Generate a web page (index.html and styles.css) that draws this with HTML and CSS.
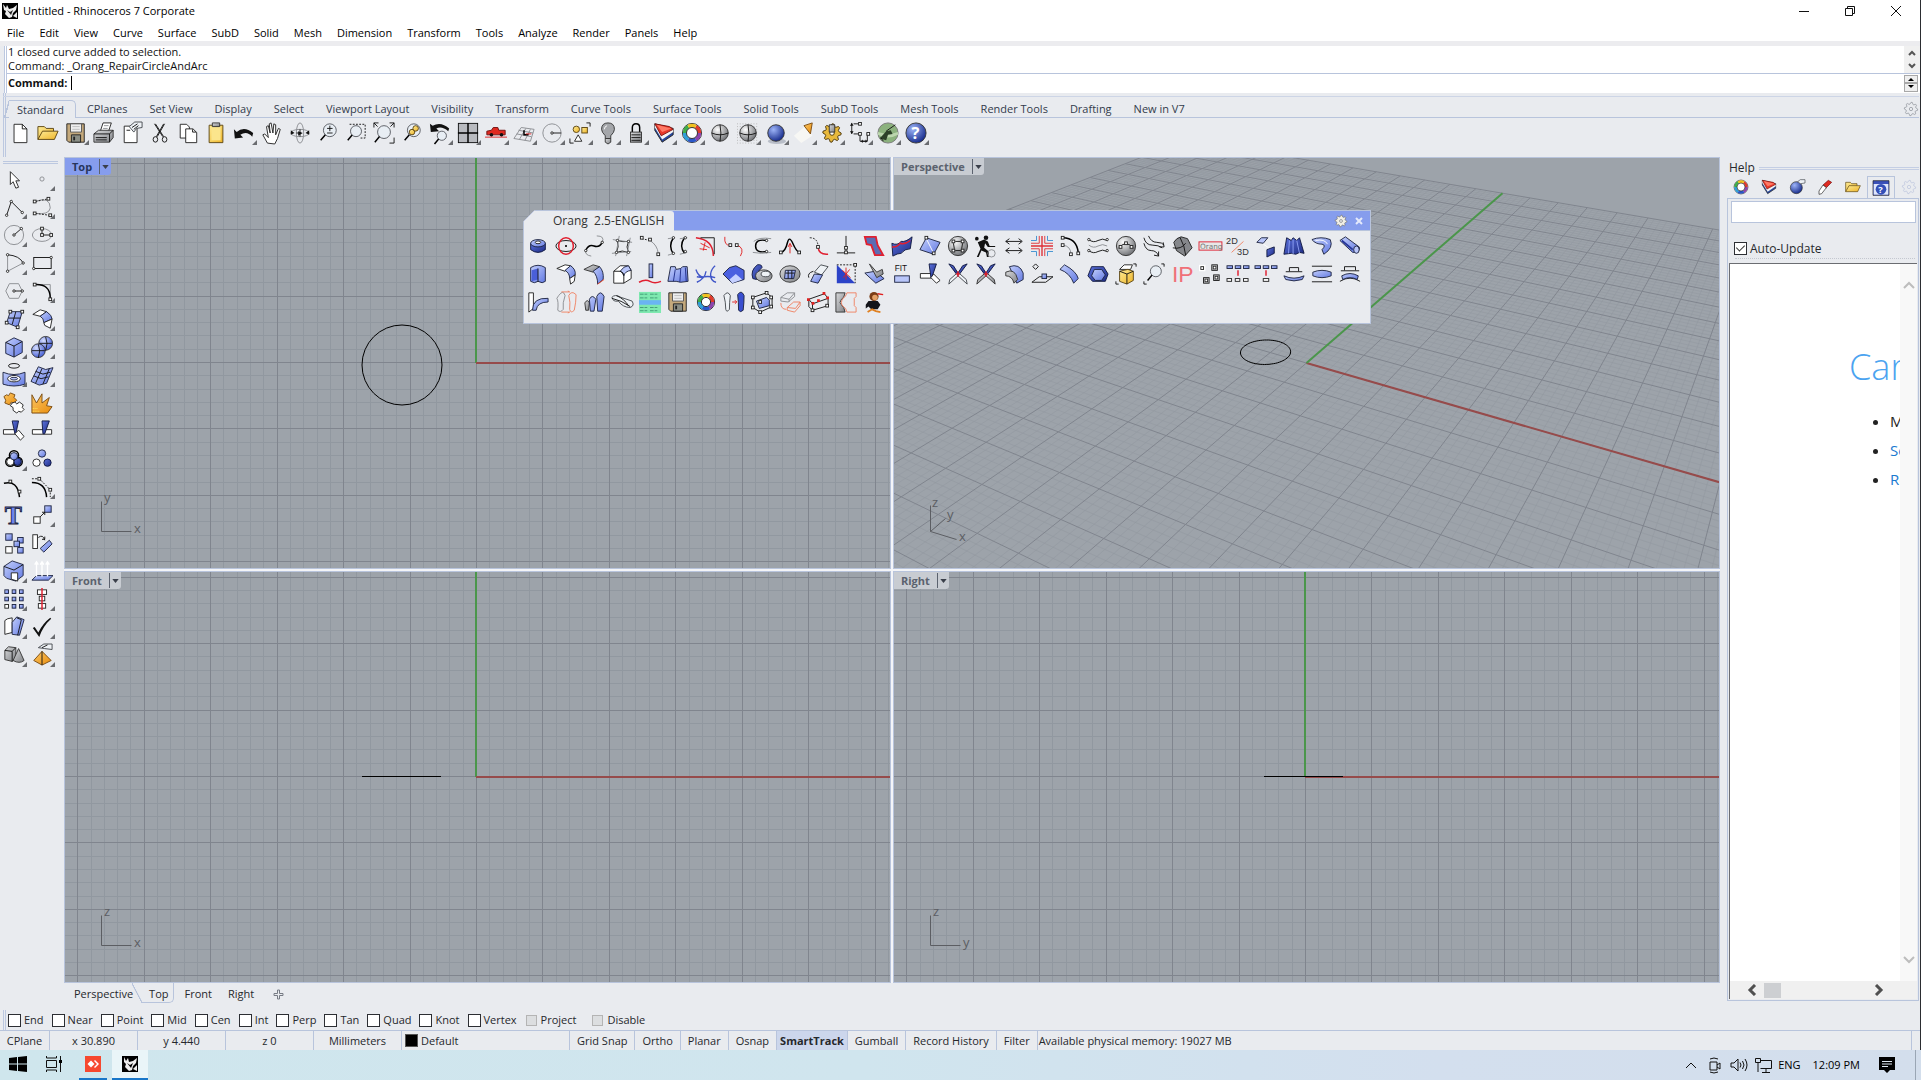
FILE: index.html
```html
<!DOCTYPE html>
<html lang="en">
<head>
<meta charset="utf-8">
<title>Untitled - Rhinoceros 7 Corporate</title>
<link rel="stylesheet" href="styles.css">
</head>
<body>
<div class="app">
  <header class="titlebar">
    <svg class="logo" viewBox="0 0 16 16" aria-hidden="true"><path d="M0 0h16v16H0z" fill="#000"/><path d="M1 1l3 4 1-3 2 4 4-1 4-3-1 5-3 3-1 4-3 1-4-4 1-3-2-1z" fill="#eee"/><path d="M5 7l3 2 3-2-2 5z" fill="#222"/><path d="M11 13l4-4v6z" fill="#eee"/></svg>
    <h1>Untitled - Rhinoceros 7 Corporate</h1>
    <div class="window-buttons">
      <button aria-label="Minimize"><svg viewBox="0 0 12 12"><path d="M1 6.500h10" class="k"/></svg></button>
      <button aria-label="Restore"><svg viewBox="0 0 12 12"><path d="M1.500 3.500h7v7h-7zM3.500 3.500v-2h7v7h-2" class="k"/></svg></button>
      <button aria-label="Close"><svg viewBox="0 0 12 12"><path d="M1 1l10 10M11 1L1 11" class="k"/></svg></button>
    </div>
  </header>
  <nav class="menubar">
    <button>File</button><button>Edit</button><button>View</button><button>Curve</button><button>Surface</button><button>SubD</button><button>Solid</button><button>Mesh</button><button>Dimension</button><button>Transform</button><button>Tools</button><button>Analyze</button><button>Render</button><button>Panels</button><button>Help</button>
  </nav>

  <section class="command">
    <div class="history">
      <p>1 closed curve added to selection.<br>Command: _Orang_RepairCircleAndArc</p>
      <div class="history-scroll">
        <svg viewBox="0 0 8 6"><path d="M1 5l3-3 3 3" class="chev"/></svg>
        <svg viewBox="0 0 8 6"><path d="M1 1l3 3 3-3" class="chev"/></svg>
      </div>
    </div>
    <div class="prompt">
      <label for="cmd">Command:</label><span class="caret"></span><input id="cmd" type="text" autocomplete="off">
      <div class="spinner">
        <button aria-label="Previous"><svg viewBox="0 0 8 6"><path d="M1 5l3-3 3 3z"/></svg></button>
        <button aria-label="Next"><svg viewBox="0 0 8 6"><path d="M1 1l3 3 3-3z"/></svg></button>
      </div>
    </div>
  </section>

  <nav class="tabs">
    <button class="active">Standard</button><button>CPlanes</button><button>Set View</button><button>Display</button><button>Select</button><button>Viewport Layout</button><button>Visibility</button><button>Transform</button><button>Curve Tools</button><button>Surface Tools</button><button>Solid Tools</button><button>SubD Tools</button><button>Mesh Tools</button><button>Render Tools</button><button>Drafting</button><button>New in V7</button>
    <button class="tab-options" aria-label="Options" data-gear="#8a8e96"></button>
  </nav>
  <div class="toolbar" data-toolbar="standard"></div>

  <main class="workspace">
    <aside class="sidebar"><div class="grip"></div><div class="side-tools" data-toolbar="side"></div></aside>

    <div class="center">
      <div class="viewports">
        <section class="viewport" data-view="top"><div class="vp-label active"><button>Top</button><button aria-label="Top menu"><svg viewBox="0 0 8 5"><path d="M0 0h8L4 5z"/></svg></button></div></section>
        <section class="viewport" data-view="perspective"><div class="vp-label"><button>Perspective</button><button aria-label="Perspective menu"><svg viewBox="0 0 8 5"><path d="M0 0h8L4 5z"/></svg></button></div></section>
        <section class="viewport" data-view="front"><div class="vp-label"><button>Front</button><button aria-label="Front menu"><svg viewBox="0 0 8 5"><path d="M0 0h8L4 5z"/></svg></button></div></section>
        <section class="viewport" data-view="right"><div class="vp-label"><button>Right</button><button aria-label="Right menu"><svg viewBox="0 0 8 5"><path d="M0 0h8L4 5z"/></svg></button></div></section>
      </div>
      <nav class="view-tabs">
        <button>Perspective</button><button class="active">Top</button><button>Front</button><button>Right</button>
        <button aria-label="New viewport"><svg viewBox="0 0 11 11"><path d="M4.500 1h2v3.500H10v2H6.500V10h-2V6.500H1v-2h3.500z" fill="none" stroke="#777b84"/></svg></button>
      </nav>
    </div>

    <aside class="panel">
      <div class="panel-title">Help<span></span></div>
      <div class="panel-tabs" data-toolbar="panel"></div>
      <div class="panel-body">
        <input class="search" type="text" aria-label="Search help">
        <label class="check"><input type="checkbox" checked>Auto-Update</label>
        <hr>
        <div class="browser">
          <div class="page-row">
            <article class="page">
              <h2>Can</h2>
              <ul><li>M</li><li><a href="#search">Se</a></li><li><a href="#retry">Re</a></li></ul>
            </article>
            <div class="vscroll">
              <svg viewBox="0 0 12 10"><path d="M1 8l5-5 5 5"/></svg>
              <svg viewBox="0 0 12 10"><path d="M1 2l5 5 5-5"/></svg>
            </div>
          </div>
          <div class="hscroll">
            <svg viewBox="0 0 10 12"><path d="M8 1L3 6l5 5"/></svg><span></span>
            <svg viewBox="0 0 10 12"><path d="M2 1l5 5-5 5"/></svg>
          </div>
        </div>
      </div>
    </aside>
  </main>

  <div class="osnap">
    <label><input type="checkbox">End</label><label><input type="checkbox">Near</label><label><input type="checkbox">Point</label><label><input type="checkbox">Mid</label><label><input type="checkbox">Cen</label><label><input type="checkbox">Int</label><label><input type="checkbox">Perp</label><label><input type="checkbox">Tan</label><label><input type="checkbox">Quad</label><label><input type="checkbox">Knot</label><label><input type="checkbox">Vertex</label><label class="wide"><input type="checkbox" disabled>Project</label><label class="wider"><input type="checkbox" disabled>Disable</label>
  </div>
  <footer class="status">
    <button class="w49">CPlane</button><span class="w88">x 30.890</span><span class="w88">y 4.440</span><span class="w88">z 0</span><button class="w88">Millimeters</button><button class="layer"><i></i>Default</button><button>Grid Snap</button><button>Ortho</button><button>Planar</button><button>Osnap</button><button class="on">SmartTrack</button><button>Gumball</button><button>Record History</button><button>Filter</button><span class="memory">Available physical memory: 19027 MB</span>
  </footer>

  <section class="palette" aria-label="Orang">
    <header><h2>Orang&nbsp; 2.5-ENGLISH</h2><button aria-label="Options" data-gear="#f1efe6"></button><button aria-label="Close"><svg viewBox="0 0 10 10"><path d="M2 2l6 6M8 2L2 8" stroke="#e4e9fb" stroke-width="2"/></svg></button></header>
    <div class="palette-tools" data-toolbar="orang"></div>
  </section>
</div>

<footer class="taskbar">
  <button aria-label="Start"><svg viewBox="0 0 18 18"><path d="M0 3l8-1v6.500H0zM9 2l9-1v7.500H9zM0 9.500h8V16l-8-1zM9 9.500h9V17l-9-1z"/></svg></button>
  <button aria-label="Task View"><svg viewBox="0 0 18 18"><path d="M1.500 5.500h10v7h-10zM1.500 1v2h10V1M1.500 17v-2h10v2M15.500 1v16" class="k"/><path d="M14 5h3v3h-3z"/></svg></button>
  <button class="running" aria-label="AnyDesk"><svg viewBox="0 0 18 18"><path d="M1 1h16v16H1z" fill="#f6482f"/><path d="M7 5.500L10.500 9 7 12.500 3.500 9z" fill="#fff"/><path d="M10 6l1-1 4 4-4 4-1-1 3-3z" fill="#fff"/></svg></button>
  <button class="running current" aria-label="Rhinoceros"><svg viewBox="0 0 18 18"><path d="M1 1h16v16H1z"/><path d="M3 2l2 4 2-3 1 4 4-1 4-3-1 5-3 3-1 4-3 1-4-4 1-3-2-2z" fill="#eee"/><path d="M6 8l3 2 3-2-2 5z"/><path d="M12 14l4-4v6z" fill="#eee"/></svg></button>
  <div class="tray">
    <svg viewBox="0 0 18 18"><path d="M4 12l5-5 5 5" class="k"/></svg>
    <svg viewBox="0 0 18 18"><path d="M4 6h7v8H4zM11 9l3-2v6l-3-2M4 3q4-2 8 0M4 16q4 2 8 0" class="k"/></svg>
    <svg viewBox="0 0 18 18"><path d="M1 7h3l4-4v12l-4-4H1zM10 6.500q2 2.500 0 5M12.500 5q3 4 0 8M15 3q4 6 0 12" class="k"/></svg>
    <svg viewBox="0 0 18 18"><path d="M6.500 4.500h11v8h-11M12 13v3M8 16.500h8M1.500 2.500h5v4h-5zM4 7v9" class="k"/></svg>
    <span>ENG</span><time>12:09 PM</time>
    <button aria-label="Notifications"><svg viewBox="0 0 18 18"><path d="M1 1h16v13h-5l-3 3-3-3H1z"/><path d="M4 5.500h10M4 8h10M4 10.500h6" stroke="#dde6f0"/></svg></button>
  </div>
</footer>
<script src="script.js"></script>
</body>
</html>
```
FILE: styles.css
```css
* { box-sizing: border-box; }
body { margin: 0; height: 100vh; display: flex; flex-direction: column; overflow: hidden; background: #e9ebef; color: #26282c; font: 11px/14px "Open Sans", "Noto Sans", sans-serif; }
button, input { font: inherit; color: inherit; }
button { margin: 0; padding: 0; border: 0; background: none; display: inline-flex; align-items: center; justify-content: center; white-space: nowrap; }
h1, h2, p, ul { margin: 0; padding: 0; font-weight: 400; }
svg { display: block; flex: none; }
.app { flex: 1; min-height: 0; display: flex; flex-direction: column; position: relative; border-right: 1px solid #2b2d31; }

.titlebar { height: 22px; flex: none; background: #fff; display: flex; align-items: center; padding-left: 2px; color: #000; }
.titlebar .logo { width: 16px; height: 16px; margin-right: 5px; }
.titlebar h1 { font-size: 11px; }
.window-buttons { margin: 0 1px 0 auto; display: flex; }
.window-buttons button { width: 46px; height: 20px; }
.window-buttons svg { width: 12px; height: 12px; }
.menubar { height: 24px; flex: none; background: #fff; display: flex; gap: 1px; align-items: flex-start; color: #000; border-bottom: 5px solid #ececef; }
.menubar button { height: 20px; padding: 1px 7px 0; }

.command { flex: none; margin-left: 4px; border-left: 3px double #bcc8e0; background: #fff; color: #111; }
.history { height: 28px; display: flex; justify-content: space-between; border-bottom: 1px solid #b8c4dc; padding-left: 1px; overflow: hidden; }
.history p { line-height: 14px; margin-top: -1px; }
.history-scroll { width: 16px; background: #f0f0f0; display: flex; flex-direction: column; justify-content: space-around; align-items: center; }
.history-scroll svg { width: 8px; height: 6px; }
.chev { fill: none; stroke: #555; stroke-width: 2; }
.prompt { height: 18px; margin-bottom: 1px; display: flex; align-items: center; padding-left: 1px; }
.prompt label { font-weight: 700; }
.caret { width: 1px; height: 14px; background: #000; margin-left: 4px; }
.prompt input { flex: 1; border: 0; outline: 0; height: 14px; background: transparent; }
.spinner { width: 14px; height: 17px; margin-right: 2px; display: flex; flex-direction: column; }
.spinner button { flex: 1; border: 1px solid #a8a8a8; background: #efefef; }
.spinner svg { width: 8px; height: 6px; }

.tabs { height: 25px; flex: none; display: flex; align-items: flex-end; margin: 0 1px 0 3px; padding-left: 3px; border-left: 3px double #bcc8e0; border-bottom: 1px solid #b8c4dc; position: relative; }
.tabs::before { content: ""; position: absolute; left: -3px; right: 0; top: 3px; border-top: 1px solid #cdd5e6; }
.tabs button { height: 17px; padding: 0 11px; color: #333b4c; position: relative; }
.tabs .active { border: 1px solid #b8c4dc; border-width: 1px 1px 0 0; border-radius: 0 5px 0 0; margin-bottom: -1px; height: 18px; background: #e9ebef; padding: 0 11px 0 8px; }
.tabs .active::before { content: ""; position: absolute; left: -5px; top: 0; width: 5px; height: 17px; background: linear-gradient(106deg, transparent 45%, #b8c4dc 46% 60%, transparent 61%); }
.tabs .tab-options { margin-left: auto; padding: 0; width: 16px; height: 17px; }
.tabs .tab-options svg { width: 16px; height: 16px; }

.toolbar { flex: none; height: 39px; display: flex; margin-left: 3px; padding-top: 1px; border-left: 3px double #bcc8e0; }
.tool { width: 28px; height: 28px; position: relative; flex: none; }
.tool svg { width: 22px; height: 22px; overflow: visible; }
.tool.more::after { content: ""; position: absolute; right: 1px; bottom: 2px; width: 5px; height: 5px; background: #6a6c70; clip-path: polygon(100% 0, 100% 100%, 0 100%); }

.workspace { flex: 1; min-height: 0; display: grid; grid-template-columns: 64px minmax(0, 1fr) 200px; }
.sidebar { padding: 4px 0 0 0; }
.grip { height: 4px; margin: 0 6px 0 3px; border-top: 3px double #bcc8e0; }
.side-tools { display: grid; grid-template-columns: 28px 28px; }
.center { display: flex; flex-direction: column; min-width: 0; }
.viewports { flex: 1; min-height: 0; display: grid; grid-template: repeat(2, minmax(0, 1fr)) / repeat(2, minmax(0, 1fr)); gap: 2px; background: #f4f5f8; }
.viewport { position: relative; border: 1px solid #b8c4dc; background: #9da3aa; overflow: hidden; }
.viewport > svg { position: absolute; inset: 0; width: 100%; height: 100%; }
.minor { fill: none; stroke: #9198a0; stroke-width: 1; }
.major { fill: none; stroke: #80858e; stroke-width: 1; }
.ortho { shape-rendering: crispEdges; }
.persp .minor { stroke-opacity: .5; }
.red-axis { stroke: #964b4b; stroke-width: 2; }
.green-axis { stroke: #4b964b; stroke-width: 2; }
.curve { fill: none; stroke: #000; }
.triad { fill: none; stroke: #5c5e63; }
.viewport text { font-size: 13px; fill: #5c5e63; }
.vp-label { position: absolute; z-index: 1; left: 0; top: 0; height: 17px; display: flex; align-items: center; background: #c8ccd2; color: #5b626e; font-weight: 700; border-radius: 0 0 3px 0; }
.vp-label.active { background: #869ded; color: #27355c; }
.vp-label button:first-child { padding: 0 7px; height: 15px; border-right: 1px solid #5b626e; }
.vp-label button:last-child { width: 11px; }
.vp-label svg { width: 7px; height: 4px; fill: #3a3f4a; }

.view-tabs { height: 27px; flex: none; display: flex; padding-left: 2px; }
.view-tabs button { height: 20px; padding: 2px 8px 0; position: relative; }
.view-tabs .active { border: 1px solid #b8c4dc; border-width: 0 1px 1px 0; border-radius: 0 0 5px 0; padding: 2px 5px 0 8px; margin-right: 2px; }
.view-tabs .active::before { content: ""; position: absolute; left: -9px; top: 0; width: 10px; height: 20px; background: linear-gradient(63deg, transparent 46%, #b8c4dc 47% 53%, transparent 54%); }
.view-tabs svg { width: 11px; height: 11px; margin-left: 3px; }

.panel { padding: 0 1px 9px 7px; display: flex; flex-direction: column; min-width: 0; }
.panel-title { height: 19px; display: flex; align-items: center; padding: 3px 0 0 2px; gap: 4px; font-size: 12px; }
.panel-title span { flex: 1; border-top: 3px double #c4cee4; }
.panel-tabs { display: flex; height: 22px; align-items: center; overflow: hidden; }
.panel-tabs .tool { height: 22px; }
.panel-tabs .tool svg { width: 16px; height: 16px; }
.panel-tabs .tool.active { border: 1px solid #b8c4dc; border-bottom: 0; }
.panel-body { flex: 1; min-height: 0; display: flex; flex-direction: column; border: 1px solid #b8c4dc; padding: 2px 1px 1px 1px; }
.search { height: 22px; margin: 0 1px 0 2px; border: 1px solid #b8c4dc; background: #fff; min-width: 0; }
.check { display: flex; align-items: center; gap: 3px; margin: 18px 0 0 5px; height: 15px; font-size: 12px; }
input[type=checkbox] { appearance: none; margin: 0; width: 13px; height: 13px; border: 1px solid #2c2e33; background: #fff; flex: none; }
input[type=checkbox]:checked { position: relative; }
input[type=checkbox]:checked::after { content: ""; position: absolute; left: 3px; top: 0; width: 4px; height: 7px; border: solid #333; border-width: 0 1px 1px 0; transform: rotate(45deg); }
input[type=checkbox]:disabled { width: 11px; height: 11px; border-color: #b4b4b4; background: #dcdee0; }
.panel hr { margin: 2px 2px 0 6px; border: 0; border-top: 1px dotted #c4c8d0; }
.browser { flex: 1; min-height: 0; margin-top: 4px; display: flex; flex-direction: column; border: solid #6b6d72; border-width: 1px 0 0 1px; background: #fff; }
.page-row { flex: 1; min-height: 0; display: flex; }
.page { flex: 1; min-width: 0; overflow: hidden; padding: 74px 0 0 119px; font-weight: 300; white-space: nowrap; }
.page h2 { font-size: 36px; line-height: 58px; font-weight: 300; color: #4ba3f0; }
.page ul { padding: 11px 0 0 41px; font-size: 15px; line-height: 29px; color: #222; }
.page a { color: #1a7ad0; text-decoration: none; }
.vscroll { width: 17px; background: #f8f8f8; display: flex; flex-direction: column; justify-content: space-between; align-items: center; padding: 16px 0; }
.vscroll svg { width: 12px; height: 10px; fill: none; stroke: #bdbdbd; stroke-width: 2; }
.hscroll { height: 18px; background: #f0f0f0; display: flex; align-items: center; padding: 0 33px 0 17px; }
.hscroll svg { width: 10px; height: 12px; fill: none; stroke: #505050; stroke-width: 3; }
.hscroll span { width: 17px; height: 15px; background: #cdcfd2; margin: 0 auto 0 7px; }

.osnap { height: 20px; flex: none; display: flex; align-items: center; gap: 8px; margin-left: 3px; padding-left: 2px; border-left: 3px double #bcc8e0; }
.osnap label { display: flex; align-items: center; gap: 3px; }
.osnap .wide { margin-left: 1px; gap: 4px; }
.osnap .wider { margin-left: 8px; gap: 4px; }
.status { height: 20px; flex: none; display: flex; border-top: 1px solid #b8c4dc; padding-right: 8px; }
.status > * { display: flex; align-items: center; justify-content: center; padding: 0 7px; border-right: 1px solid #b8c4dc; }
.status .w49 { width: 50px; }
.status .w88 { width: 88px; }
.status .layer { width: 168px; justify-content: flex-start; padding-left: 3px; gap: 3px; }
.status .layer i { width: 13px; height: 13px; background: #000; border: 1px solid #555; }
.status .on { background: #ccd6ec; font-weight: 700; padding: 0 3px; }
.status .memory { flex: 1; justify-content: flex-start; padding-left: 1px; }

.palette { position: absolute; left: 523px; top: 210px; width: 848px; height: 114px; background: #e9ebef; border: 1px solid #b8c4dc; clip-path: polygon(12px 0, 100% 0, 100% 100%, 0 100%, 0 12px); z-index: 3; }
.palette header { height: 20px; display: flex; align-items: center; background: #869ded; border-bottom: 1px solid #b8c4dc; padding-right: 2px; }
.palette h2 { width: 150px; height: 20px; padding-left: 29px; font-size: 12px; line-height: 20px; background: #e9ebef; margin-right: auto; border-radius: 0 3px 0 0; color: #333; }
.palette header button { width: 18px; height: 18px; }
.palette header button svg { width: 14px; height: 14px; }
.palette header button:last-child svg { width: 10px; height: 10px; }
.palette-tools { display: grid; grid-template-columns: repeat(30, 28px); padding-top: 1px; }

.taskbar { height: 30px; flex: none; display: flex; align-items: stretch; background: linear-gradient(90deg, #cfe6ed, #d0e5ee 45%, #d3dfee 75%, #d3deec); padding-left: 4px; }
.taskbar > button { width: 28px; border-bottom: 2px solid transparent; }
.taskbar > button:nth-child(2) { margin: 0 8px 0 10px; width: 24px; }
.taskbar svg { width: 18px; height: 18px; }
.taskbar > .running { width: 28px; border-color: #1976c8; margin-left: 5px; }
.taskbar > .current { width: 36px; background: #eaf5f8; }
.tray { margin-left: auto; display: flex; align-items: center; gap: 6px; padding-right: 6px; margin-right: 5px; border-right: 1px solid #9aa6b4; color: #000; }
.tray time { padding: 0 12px 0 6px; }
.tray button { margin-right: 13px; }

.k { fill: none; stroke: #111; stroke-width: 1; }
.K { fill: none; stroke: #000; stroke-width: 1.600; }
.g { fill: none; stroke: #8a8c90; stroke-width: 1; }
.r { fill: none; stroke: #e02020; stroke-width: 1; }
.R { fill: none; stroke: #e02030; stroke-width: 1.600; }
.o { fill: none; stroke: #f08060; stroke-width: 1; }
.h { fill: none; stroke: #111; stroke-dasharray: 2 1.500; }
.b { stroke: #1c2340; stroke-width: 1; }
.l { fill: #b9c6fa; stroke: #1c2340; stroke-width: 1; }
.d { stroke: #101840; stroke-width: 1; }
.B { fill: #4a5fd8; stroke: none; }
.w { fill: #fff; stroke: #222; stroke-width: 1; }
.G { stroke: #333; stroke-width: 1; }
.y { stroke: #5a4310; stroke-width: 1; }
.O { stroke: #7a4a10; stroke-width: 1; }
.X { fill: #111; stroke: none; }
.F { fill: #e02a20; stroke: #701010; stroke-width: 1; }
.W { fill: none; stroke: #fff; stroke-width: 1; }
.z { fill: #eef2f6; stroke: #44484e; stroke-width: 1; }
```
FILE: script.js
```js
// Small vocabulary for the icon drawings; class names set stroke and flat fills,
// and the shaded materials below take a gradient.
const shades = {
  b: ['#c3cffc', '#6279e2'], d: ['#5c72dc', '#1d2b84'], G: ['#d9dadc', '#808286'],
  y: ['#fdeb96', '#eeb428'], O: ['#fbc765', '#e98d0e'],
  gs: ['#ffffff', '#75777b'], bs: ['#9db4f8', '#1c3190'], ls: ['#d4ddff', '#4b63d6']
};
const fill = c => shades[c] ? ` fill="url(#${c})"` : '';
const P = (c, d) => `<path class="${c}"${fill(c)} d="${d}"/>`;
const C = (c, x, y, r, ry = r) => `<ellipse class="${c}"${fill(c)} cx="${x}" cy="${y}" rx="${r}" ry="${ry}"/>`;
const N = (...a) => a.map((v, i) => i % 2 ? '' : `<rect class="w" x="${v - 1.5}" y="${a[i + 1] - 1.5}" width="3" height="3"/>`).join('');
const D = (...a) => a.map((v, i) => i % 2 ? '' : C('w', v, a[i + 1], 1.3)).join('');
const Q = (c, x, y, w, h = w) => `<rect class="${c}"${fill(c)} x="${x}" y="${y}" width="${w}" height="${h}"/>`;
const T = (s, x, y, size, color, family = 'Open Sans', weight = 400) => `<text x="${x}" y="${y}" font-size="${size}" fill="${color}" font-family="${family}, sans-serif" font-weight="${weight}">${s}</text>`;
const wheel = (r = 7) => {
  const colors = ['#e03a2c', '#8e44ad', '#2b57c8', '#2f9fd8', '#3fae49', '#f0c020'];
  const len = 2 * Math.PI * r / 6;
  return C('w', 12, 12, r + 2.4) + colors.map((c, i) =>
    `<circle cx="12" cy="12" r="${r}" fill="none" stroke="${c}" stroke-width="4" stroke-dasharray="${len} ${len * 5}" transform="rotate(${-60 + i * 60} 12 12)"/>`).join('') +
    `<circle cx="12" cy="12" r="${r - 2}" fill="#fff" stroke="#222"/>`;
};
const gear = (color, line = '#777', hole = '#e9ebef') => {
  let d = '';
  for (let i = 0; i < 32; i++) {
    const r = i % 4 < 2 ? 10 : 7.5, a = i * Math.PI / 16;
    d += (i ? 'L' : 'M') + (12 + r * Math.cos(a)).toFixed(1) + ' ' + (12 + r * Math.sin(a)).toFixed(1);
  }
  return `<path d="${d}z" fill="${color}" stroke="${line}"/><circle cx="12" cy="12" r="2.500" fill="${hole}" stroke="${line}"/>`;
};
const ball = (id, x, y, r) => `<circle cx="${x}" cy="${y}" r="${r}" fill="url(#${id})" stroke="#333"/>`;
const lens = (x = 13, y = 9, r = 6) => `<circle cx="${x}" cy="${y}" r="${r}" fill="#e8eef4" stroke="#55595f"/>` + P('K', `M${x - r * .7} ${y + r * .7}L${x - r - 3} ${y + r + 4}`);
const floppy = '<path d="M2 2h19v20H4l-2-2z" fill="#c4a97c" stroke="#222"/><path d="M6 2h12v9H6z" fill="#eee" stroke="#555"/><path d="M7 14h10v8H7z" fill="#8b8f86" stroke="#222"/><path d="M9 16h2v4H9z" fill="#222"/><path d="M8 5h8M8 8h8" stroke="#bbb"/>';
const folder = P('y', 'M1 19V5h7l2 2h8v3') + P('y', 'M1 19L6 10h17l-4 9z');
const layers = '<path d="M2 2v7l8 13 12-8V7z" fill="#27479c" stroke="#222"/><path d="M2 3v3l8 13 12-8V8z" fill="#f4f4f4"/><path d="M2 2l7 13 13-7-4-3z" fill="#e8382a" stroke="#7c1410"/><path d="M4 3l6 8 10-4z" fill="#ff7a66"/>';
const blades = (a, b) => P(a, 'M2 1l5 2 5 8-1 2z') + P(a, 'M22 1l-5 2-5 8 1 2z') + P(b, 'M2 23l1-5 8-7 1 3z') + P(b, 'M22 23l-1-5-8-7-1 3z') + P('R', 'M12 9v6M10 12h4');
const brackets = P('k', 'M20 1h3v3M1 20v3h3');

// Each entry: name, drawing, and whether the button opens a flyout.
const toolbars = {
  standard: [
    ['New', P('w', 'M5.500 2.500h9l5 5v15h-14z') + P('k', 'M14.500 2.500v5h5')],
    ['Open', folder],
    ['Save', floppy, 1],
    ['Print', P('w', 'M8 10L11 1h9l-3 9') + P('g', 'M12 4h5M11 7h5') + P('G', 'M1 13l5-4h16v8l-4 5H1z') + P('k', 'M1 13h17l4-4M18 13v9M3 17h12M3 19.500h12')],
    ['Properties', P('w', 'M3.500 4.500h14v18h-14z') + P('z', 'M9 5l6-5h8v6l-6 1-3 4z') + P('k', 'M6 9h4M12 6l6-4M14 8l5-4')],
    ['Cut', P('k', 'M6 2l9 14M17 2L9 16M7 2l9 14M16 2L8 16') + C('k', 7, 19, 2.5, 3) + C('k', 17, 19, 2.5, 3)],
    ['Copy', P('w', 'M3.500 2.500h7l3 3v12h-10z') + P('w', 'M9.500 7.500h8l4 4v11h-12z') + P('k', 'M17 8v3h4')],
    ['Paste', P('y', 'M4.500 3.500h15v19h-15z') + '<path d="M7 5h10v15H7z" fill="#fbe58c"/>' + P('G', 'M8 1h8v4H8z')],
    ['Undo', P('X', 'M2 18L1 8l3 3q8-7 18 1l-1 4q-6-7-13-2l3 3z'), 1],
    ['Pan', P('w', 'M7 23L2 14l2-1 4 4-2-12 2-1 2 8-1-10 2-1 2 11 1-10 2 1v11l3-7 2 1-3 10-3 6z')],
    ['Rotate view', C('g', 12, 12, 10, 4) + C('g', 12, 12, 4, 11) + P('X', 'M10 10l5 2-5 3zM2 14l0-5 4 3zM22 9v5l-4-2z') + P('k', 'M12 8v8M8 12h5')],
    ['Zoom', lens(14, 9, 7) + P('k', 'M11 7h6M14 4v6M11 12h6')],
    ['Zoom window', P('h', 'M5 2.500h17v15h-5') + lens(12, 10, 6)],
    ['Zoom extents', lens(12, 11, 7) + P('k', 'M1 6V1h5M18 1h5v5M23 17v6h-5M1 1l4 4M23 1l-4 4')],
    ['Zoom selected', lens(14, 9, 7) + C('y', 12, 11, 3) + C('y', 16, 7, 3)],
    ['Undo view', P('X', 'M2 11L1 2l3 2q9-5 18 3l-1 3q-7-6-13-3l3 3z') + lens(14, 15, 5), 1],
    ['Four viewports', '<rect x="1.500" y="1.500" width="21" height="21" fill="#b8babf" stroke="#111"/>' + P('K', 'M12 1v22M1 12h22'), 1],
    ['Car', P('F', 'M2 14v-4l5-1 2-3h5l1 3h7v5z') + C('X', 7, 14, 2) + C('X', 18, 14, 2) + P('r', 'M0 16.500h24'), 1],
    ['CPlane', P('g', 'M1 18L9 6l14 2-4 13zM4 13l16 3M6 9l16 3M7 19l7-12M13 20l6-12') + P('K', 'M12 9v5h5') + P('r', 'M14 13h6'), 1],
    ['Set CPlane', C('g', 12, 12, 10) + P('k', 'M13 12h9') + D(12, 12), 1],
    ['Select objects', C('y', 8, 8, 3.5) + Q('y', 14, 6, 6) + P('w', 'M10 14l4 7H6z') + P('k', 'M19 1h4v4M1 18v5h4'), 1],
    ['Hide', '<path d="M5 8q0-7 7-7t7 7q0 3-4 7v3H9v-3Q5 11 5 8z" fill="#a4a6aa" stroke="#333"/>' + P('W', 'M8 8q0-3 3-4') + P('G', 'M9 18h6v4l-3 2-3-2z'), 1],
    ['Lock', P('K', 'M8 11V6q0-4 4-4t4 4v5') + Q('G', 6, 11, 12, 11) + P('k', 'M7 14h10M7 17h10M7 20h10'), 1],
    ['Layers', layers, 1],
    ['Colors', wheel(8), 1],
    ['Shaded', ball('gs', 12, 12, 9) + P('k', 'M3 12q9 4 18 0M12 3q2 9 0 18')],
    ['Rendered', '<path d="M0 2h24M0 5h24M0 8h24M0 11h24M0 14h24M0 17h24M0 20h24M0 23h24" stroke="#b4b4b4" stroke-dasharray="1 2"/>' + ball('gs', 12, 12, 9) + P('k', 'M3 12q9 4 18 0M12 3q2 9 0 18'), 1],
    ['Render', '<ellipse cx="13" cy="21" rx="10" ry="3" fill="#b9bec8"/>' + ball('bs', 12, 12, 9), 1],
    ['Spotlight', '<path d="M14 4L1 15l8 8 12-8z" fill="#f7f7f4"/>' + P('O', 'M12 4l9-3-2 12z'), 1],
    ['Options', gear('#e8b93c', '#4a3508', '#fff') + P('G', 'M9 3h6v8H9z'), 1],
    ['Dimension', P('k', 'M3 1v12M5 2h7M5 13h6M12 12v9h8v-9M14 21h5') + P('X', 'M1 4l2-3 2 3zM1 10l2 3 2-3zM15 19l-2 2 2 2zM18 19l2 2-2 2z') + N(12, 2, 12, 13, 21, 13), 1],
    ['Grasshopper', '<circle cx="12" cy="12" r="11" fill="#8cb27e" stroke="#777"/><path d="M1 14q11 6 22 0v-3q-10 4-22 0z" fill="#bcd6ae"/><path d="M3 18l7-8 5-1 2 4-5 1-2 6z" fill="#2c4028"/>' + P('k', 'M10 10L20 3M4 17l3 4'), 1],
    ['Help', ball('bs', 12, 12, 11) + T('?', 7, 19, 18, '#fff', 'Open Sans', 700), 1]
  ],
  side: [
    ['Select', P('w', 'M8 4v14l3-3 3 7 3-1-3-7h4z')], ['Point', C('g', 12, 12, 2.3), 1],
    ['Polyline', P('k', 'M4 21L9 6l12 12') + D(4, 21, 9, 6, 21, 18), 1], ['Curve', P('g', 'M4 6q17-6 17 7-1 8-17 6') + P('h', 'M5 6l14-3M5 19l15 2') + N(4, 6, 19, 3, 4, 19, 21, 21), 1],
    ['Circle', C('g', 12, 12, 10.5) + P('k', 'M12 12l8-7') + D(12, 12, 20, 5), 1], ['Ellipse', C('g', 12, 12, 10.5, 7) + P('k', 'M12 5v7h9') + N(12, 5, 12, 12, 22, 12), 1],
    ['Arc', P('k', 'M5 3q13 1 17 9') + P('g', 'M5 3v18l17-9') + D(5, 3, 22, 12, 5, 21), 1], ['Rectangle', Q('k', 3, 6, 19, 12) + D(3, 18, 22, 6), 1],
    ['Polygon', P('g', 'M3 12l4-8h10l4 8-4 8H7z') + P('k', 'M12 12h9') + D(12, 12, 21, 12), 1], ['Fillet curves', P('g', 'M4 5h17v15') + P('K', 'M4 5q17-1 17 15') + N(4, 5, 21, 21), 1],
    ['Surface', P('b', 'M8 4h13l-5 17-12-5z') + P('k', 'M6 11h13M14 4l-4 14') + N(8, 4, 21, 4, 4, 16, 16, 21), 1], ['Fillet surface', P('w', 'M2 7l8-5 7 2-7 5z') + P('b', 'M10 9l7-5q6 4 6 8l-9 4q0-5-4-7z') + P('w', 'M14 16l9-4-2 10-6-3z'), 1],
    ['Box', P('b', 'M3 7l9-5 9 4v12l-9 5-9-4z') + P('k', 'M3 7l9 4 9-5M12 11v12'), 1], ['Boolean union', ball('ls', 16, 8, 7.5) + ball('ls', 8, 16, 7.5) + P('k', 'M1 16h14M8 9q3 7 0 15M9 8h14M16 1q3 7 0 15'), 1],
    ['Project', C('k', 12, 2, 6, 2.5) + P('b', 'M0 9q12 5 24 0v13q-12 4-24 0z') + C('w', 12, 16, 7, 3.5) + C('l', 12, 16, 4, 1.5), 1], ['Mesh', P('b', 'M8 3l8 3 8-2-7 17-8 2-9-4z') + P('k', 'M5 8l8 3 8-2M3 13l8 3 8-2M12 5L5 21M20 5l-7 17'), 1],
    ['Join', P('O', 'M1 5l3-2 2 1 2-3 5 2-1 3 3 3-3 3-3-1-2 3-5-2 1-3z') + P('w', 'M10 12l3-1 2 2 3-2 4 3-1 3 2 2-3 3-3-1-2 2-4-3v-3l-3-2z')], ['Explode', P('O', 'M1 23V3l5 9 6-10v10l8-6-3 9 6 1-5 7z') + '<path d="M2 21h8M2 18h6" stroke="#ffe95a" stroke-dasharray="1 1"/>'],
    ['Trim', P('w', 'M.5 10.500h13v5H.5z') + P('d', 'M10 1h7l-3 14h-1z') + P('w', 'M13 15l4-4 6 7-4 4z')], ['Split', P('w', 'M1.500 10.500h21v5h-21z') + P('d', 'M12 1h8l-5 14h-2z')],
    ['Group', C('K', 12, 8, 5) + C('K', 8, 15, 5) + C('K', 16, 15, 5) + C('w', 8, 15, 4) + C('d', 16, 15, 4) + C('b', 12, 9, 4), 1], ['Ungroup', C('b', 12, 6, 4) + C('w', 6, 16, 4) + C('d', 18, 16, 4)],
    ['Control points', P('K', 'M1 8q15-4 17 15') + N(8, 6, 18, 17)], ['Edit points', P('K', 'M1 7q15 0 16 16') + P('h', 'M1 3h8l12 12v8') + N(9, 3, 21, 15), 1],
    ['Text', '<g stroke="#1c2340">' + T('T', 2, 22, 28, '#6f86ee', 'Liberation Serif', 700) + '</g>'], ['Move', Q('w', 3, 14, 7) + Q('b', 15, 2, 7) + P('k', 'M10 14l5-5M12 9h3v3'), 1],
    ['Copy objects', Q('b', 3, 2, 7) + Q('b', 16, 6, 6) + Q('b', 12, 10, 6) + Q('w', 3, 16, 7) + Q('b', 16, 17, 6)], ['Rotate', Q('w', 2, 3, 5, 15) + P('b', 'M10 18l10-9 3 4-9 9z') + P('k', 'M8 6q5-4 7 3M12 8h3V5')],
    ['SubD', P('b', 'M1 7l9-6 12 4v12l-8 6-10-3-3-3z') + P('k', 'M1 7l11 4 10-6') + P('w', 'M9 14h7v9l-7-2z'), 1], ['Extrude', P('b', 'M1 22l5-5h18l-5 5z') + '<path d="M6 18V3M12 18V3M18 18V3M4 5l2-3 2 3M10 5l2-3 2 3M16 5l2-3 2 3" stroke="#fff" stroke-width="1.500" fill="none"/>', 1],
    ['Array', [2, 10, 18].map(y => [2, 10, 18].map(x => Q(x === 2 && y === 18 ? 'w' : 'b', x, y, 4)).join('')).join(''), 1], ['Align', Q('w', 7, 2, 10, 5) + Q('w', 9, 9, 6, 5) + Q('w', 8, 17, 8, 5) + P('R', 'M12 0v24'), 1],
    ['Twist', P('w', 'M2 5l3-2 5-1v16l-8 2z') + P('b', 'M10 7l5-6 8 3-5 17-8-1z') + P('k', 'M15 2l5 2-4 17'), 1], ['Check', P('X', 'M2 13l2-1 4 6Q13 8 21 2l1 1Q13 11 9 23z'), 1],
    ['Solids', P('G', 'M2 7l4-4 8 1v12l-4 3-8-2z') + P('G', 'M17 5l6 13q-5 4-12 0z') + P('k', 'M2 7l8 1 4-4M10 8v11'), 1], ['Pyramid', P('O', 'M3 18l9-10 10 10-10 5z') + P('k', 'M12 8v15') + P('z', 'M8 4l6-4h9v6l-8-1z') + P('k', 'M12 4l6-3'), 1]
  ],
  orang: [
    ['Ring', P('d', 'M4 9v7q8 6 16 0V9z') + C('b', 12, 9, 8, 4) + C('w', 12, 8, 3, 1.5)],
    ['Ellipse', C('k', 12, 12, 11, 6) + C('R', 12, 12, 8, 9) + Q('X', 11, 11, 2)],
    ['Curve', P('K', 'M3 17q3-7 9-5t9-4') + P('g', 'M15 1q9 0 6 7M3 17q-1 5 6 6') + D(3, 17, 21, 8)],
    ['Box curve', P('k', 'M7 6q6 2 12 1-3 6 0 12-7-3-13 0 3-6 1-13z') + P('g', 'M9 1L5 23M21 3l-4 20M2 5l21 3M1 20l21-2') + D(7, 6, 19, 7, 6, 19, 19, 19)],
    ['Arc points', P('h', 'M3 4l9 2') + P('g', 'M12 6q8 5 9 14') + N(3, 3, 12, 5, 21, 21)],
    ['Offset pair', P('K', 'M7 3q-6 9 0 18M19 3q-6 9 0 17') + P('g', 'M1 4l7-1M14 4l8-1M1 22l7-2M14 21l8-2') + D(7, 3, 20, 3, 7, 20, 20, 18)],
    ['Tangent arc', P('R', 'M1 3q19 2 19 20') + P('k', 'M6 3h15v18') + P('r', 'M6 9l10 5M11 8l-2 9M5 15l8 1')],
    ['Blend', P('r', 'M2 2q-1 10 6 9M15 11q9 3 4 12') + N(8, 11, 15, 11)],
    ['C curve', P('K', 'M17 6Q5 4 5 12t12 6') + P('g', 'M3 7q6-5 19-3M2 19q9 2 20 0') + D(17, 6, 17, 18)],
    ['Bell', P('K', 'M2 19q5-1 7-10t6 0 7 10') + P('r', 'M12 20V10M10 13l2-4 2 4') + N(2, 19, 22, 19)],
    ['Match', P('h', 'M3 3q9 0 9 10') + P('R', 'M12 13q1 9 11 8') + N(12, 13)],
    ['Perpendicular', P('k', 'M12 1v17M2 19.500h20') + N(12, 14, 12, 19)],
    ['Outline', '<path d="M2 2h12l2 9 6 11H13L9 11 4 10z" fill="#5b6cb4" stroke="#e02030" stroke-width="2"/>'],
    ['Curve on surface', P('d', 'M1 9q6 3 10-2 5 1 12-5l-2 13q-6 0-10 5-4 0-9 3z') + P('R', 'M1 13q5 1 9-4 5 2 11-3')],
    ['Quad', P('b', 'M8 3l15 5-7 13L1 16z') + P('W', 'M8 4l8 16') + N(8, 3, 16, 20)],
    ['Cage sphere', ball('gs', 12, 12, 10.5) + N(7, 7, 17, 7, 7, 17, 17, 17) + P('k', 'M9 7h6M7 9l1 6M17 9l-1 6M9 17h6')],
    ['Worker', C('X', 12, 3, 2.5) + P('X', 'M3 8l7-3 4 2 2 5h6v1h-8l-3-4-1 5 5 4v6h-2l-1-5-5-2-3 7H2l4-9z') + C('g', 18, 20, 4) + C('X', 2, 4, 2)],
    ['Distances', P('k', 'M3 7h17M3 17h17M7 4L3 7l4 3M17 4l4 3-4 3M7 14l-4 3 4 3M17 14l4 3-4 3')],
    ['Weave', '<path d="M9 1v8H0M15 1v8h9M9 23v-8H0M15 23v-8h9" stroke="#de3038" fill="none"/><path d="M6 1v5H0M18 1v5h6M6 23v-5H0M18 23v-5h6" stroke="#3c8fd0" fill="none"/><path d="M12 1v22M0 12h24" stroke="#de3038" stroke-width="1.500"/>'],
    ['Arc copy', P('K', 'M4 3q15 0 17 16') + P('g', 'M4 11q9 1 9 10') + N(4, 3, 21, 20) + N(4, 11, 13, 21)],
    ['Waves', P('k', 'M2 5q5 4 10 1t10 0M2 17q5 4 10 1t10 0') + P('g', 'M2 11q5 4 10 1t10 0') + D(2, 5, 22, 5, 2, 17, 22, 17)],
    ['Sphere curve', ball('gs', 12, 12, 10.5) + P('k', 'M4 14q8-9 16 0') + N(6, 13, 12, 9, 18, 13)],
    ['Flow', P('k', 'M1 3q2 8 9 8t11 3M1 9q2 8 8 8t8 6M6 1q3 7 9 7t8 3M23 13l-5 0M23 13l-1-5M17 23l-5-1M17 23l0-5')],
    ['Dark surface', '<path d="M3 8q3-5 8-6l7 2 5 10-8 9-9-6z" fill="#85878b" stroke="#222"/>' + P('k', 'M2 14q9 2 14-5M10 3q5 9 6 19')],
    ['Orang', '<rect x="0" y="7.500" width="25" height="9" fill="#e8e8e8" stroke="#e02030"/>' + T('Orang', 1, 15, 8, '#777', 'DejaVu Sans')],
    ['2D/3D', T('2D', -1, 10, 10, '#333', 'Liberation Sans') + T('3D', 11, 22, 10, '#333', 'Liberation Sans') + P('o', 'M5 19L18 7')],
    ['Place', P('l', 'M2 8l5-5h7l-5 6z') + P('d', 'M13 16l8-3v7l-8 4z') + P('W', 'M9 10l6 4')],
    ['Pleats', P('d', 'M1 21L4 3l5 3 2-3 4 3 3-3 5 17-5-1-4 2-5-1z') + '<path d="M7 6L6 20M11 5v16M15 6l3 14" stroke="#8fa2f5"/>'],
    ['Bend', P('b', 'M1 5q10-4 20 0 4 9-7 16l-2-5q5-5 0-6-7 0-11-5z') + P('W', 'M5 6q10-2 13 4')],
    ['Cylinder', P('b', 'M1 6l6-4 15 11q2 6-7 6z') + C('l', 19, 16, 3, 4) + '<path d="M3 6l12 10" stroke="#26369a" stroke-width="2"/>'],

    ['Half pipe', P('b', 'M4 5q8-5 16 0v15q-3 3-8 0-4 3-8 0z') + P('B', 'M5 8l7-2v12l-7 2z') + P('k', 'M12 6v14')],
    ['Fillet', P('w', 'M2 6l9-4 6 1-6 6z') + P('b', 'M11 8l6-5q6 4 5 10l-6 4q0-6-5-9z') + P('w', 'M16 17l6-4-1 7-4 3z')],
    ['Patch', P('G', 'M1 7l10-5 7 2-7 6z') + P('b', 'M11 9l7-5q5 5 4 14l-6 5q0-9-5-14z') + '<path d="M16 23l7-5" stroke="#f05030"/>'],
    ['Rounded box', P('w', 'M3 9l7-6h9l3 5v9l-8 5H3z') + P('l', 'M10 9q4-6 9-6l3 5q-7 1-8 6-1-4-4-5z') + P('k', 'M3 9h7q4 1 4 5v8')],
    ['Pipe drop', Q('b', 11, 1, 4, 15) + P('R', 'M0 21q7-4 12-1t12 0')],
    ['Pleat row', P('b', 'M1 20L4 4h5l1 3 5-1 2-2h5l1 16-8 1-5-1z') + '<path d="M9 7L7 20M15 6l-1 15M20 5l1 15" stroke="#1e2c86"/>'],
    ['Shards', '<path d="M1 7q3 9 9 8t12 1M2 21q9-4 10-12M17 12q0 8 6 9M2 15l6 1M22 3q-4 3-5 9" fill="none" stroke="#4056c8" stroke-width="1.500"/>'],
    ['Polygon patch', '<path d="M0 12l7-7 7-2 9 5v10l-13 4z" fill="#4b60e0" stroke="#1c2340"/><path d="M7 18l7-6 7 6-11 4z" fill="#c5d0ff"/>'],
    ['Disk', P('d', 'M2 17q-3-9 5-15 5-1 5 3-6 5-6 13z') + C('G', 14, 14, 9, 6.5) + C('z', 16, 12, 5, 3)],
    ['Patch sphere', C('G', 12, 12, 11, 9) + P('b', 'M7 8h11l-2 9H6z') + P('k', 'M10 8v9M14 8v9M7 11h10')],
    ['Rotate plane', P('z', 'M8 10l7-8 8 2-7 9z') + P('b', 'M4 20l4-8 9 1-5 9z') + P('k', 'M2 16q-2-5 5-7')],
    ['Cut plane', '<path d="M2 2v20h20z" fill="#2c43c8"/>' + P('h', 'M2 2h20v20') + P('r', 'M8 8l9 8M16 7l-7 9M12 5v13') + N(22, 2)],
    ['Planes', P('b', 'M2 11l12 11 9-5-10-8z') + P('G', 'M7 1l8 15 7-4-1-5-6 3-7-8z')],
    ['Fit', T('FIT', 4, 9, 9, '#111', 'Liberation Sans') + Q('l', 4, 14, 16, 7)],
    ['Cut', P('w', 'M1.500 11.500h12v5h-12z') + P('d', 'M11 1h8l-5 15h-1z') + P('w', 'M13 16l3-4 7 7-4 3z')],
    ['Blades', blades('d', 'z')], ['Blades grey', blades('d', 'G')],
    ['Arc surface', P('b', 'M7 4q11-4 15 7v7l-7 4z') + P('G', 'M3 10q10-5 13 8l-4 4q-2-8-9-8z')],
    ['Plane box', P('k', 'M5 1l3 3-3 3-3-3zM1 21l8-6h15l-8 6z') + Q('b', 12, 12, 5)],
    ['Arc strip', P('b', 'M1 7l5-5q13 7 15 15l-5 5Q12 11 1 7z')],
    ['Gem', P('d', 'M1 14l4-10h13l5 8-3 8H6z') + P('b', 'M8 7h8l4 6-4 6H9l-4-5z')],
    ['Box select', P('w', 'M5 7l5-5h9l-2 5z') + P('y', 'M5 9l9-2 6 2v10l-7 4-8-3z') + P('k', 'M5 9l8 3v11M13 12l7-3') + brackets],
    ['Zoom box', lens(14, 9, 6) + brackets],
    ['IP', T('IP', 1, 21, 25, '#f07078', 'Liberation Sans')],
    ['Squares', '<path d="M0 2h7v7H0z" fill="#fff"/>' + Q('k', 14, 2, 6) + Q('k', 5, 16, 6) + Q('k', 16, 13, 6) + N(3.5, 5.5, 17, 5, 8, 19, 19, 16)],
    ['Three to three', Q('b', 0, 3, 6, 3) + Q('b', 9, 3, 6, 3) + Q('b', 18, 3, 6, 3) + Q('w', 0, 17, 5, 3) + Q('w', 9, 17, 5, 3) + Q('w', 18, 17, 5, 3) + P('R', 'M12 8v6')],
    ['Three to one', Q('b', 0, 3, 6, 3) + Q('b', 9, 3, 6, 3) + Q('b', 18, 3, 6, 3) + Q('w', 9, 17, 6, 3) + P('R', 'M12 8v6')],
    ['Sag', P('k', 'M3 9.500h18M7 9V5h10v4') + P('b', 'M1 14q11 5 22 0l-2 4q-9 3-18 0z')],
    ['Lens', P('k', 'M1 3.500h22M1 20.500h22') + P('b', 'M2 10q10-4 20 0v4q-10 4-20 0z')],
    ['Dome', P('k', 'M2 8.500h20M6 8V4h12v4M1 20q11-7 22 0') + P('b', 'M3 14q9-5 18 0l-1 4q-8-4-16 0z')],

    ['Elbow', P('w', 'M2 2h5v17l-5 4z') + P('b', 'M6 21q0-14 17-13v4q-12 0-13 9z')],
    ['Soles outline', P('g', 'M4 5q5-7 7 0-3 8-2 15-3 4-6 1Q4 11 2 8z') + P('o', 'M15 5q3-6 8-1 0 8-2 17-4 4-5-1 1-8-1-15zM7 1h9l-2-1M7 23h9l-2 1')],
    ['Soles sizes', P('G', 'M2 13q3-5 5 0l-1 8H3z') + P('b', 'M7 9q3-6 7 0l-2 13H8zM15 6q4-8 8 0l-2 16h-5z')],
    ['Shoe', P('z', 'M1 7q3-4 10 0l12 4q3 5-2 7-8 0-13-7-6 1-7-4z') + P('k', 'M1 8q10 2 20 9M6 5q9 4 13 11')],
    ['Table', '<path d="M0 1h24v23H0z" fill="#7ee9b0"/><path d="M0 10h24v5H0z" fill="#6ab4f2"/><path d="M1 3.500h22M1 7.500h22M1 18h22M1 21.500h22" stroke="#3f9a74" stroke-dasharray="4 1 3 3"/>'],
    ['Save', floppy],
    ['Colors', wheel(7)],
    ['Sole swap', P('z', 'M1 5q4-6 7 0-1 7-1 15-3 4-4 0 0-8-2-15z') + '<path d="M16 4q4-6 7 1 0 8-1 16-3 3-5 0 0-9-1-17z" fill="#3a4fd0" stroke="#1c2340"/>' + P('r', 'M10 12h5M13 10l2 2-2 2')],
    ['Cage', P('k', 'M2 7l15-5 6 5v10l-13 6-8-5z') + P('b', 'M6 11l11-4 3 3v6L9 19z') + N(2, 7, 17, 2, 22, 7, 2, 18, 10, 23, 22, 17, 10, 12)],
    ['Bricks', P('g', 'M2 7l7-5h8l-6 7zM2 7v4l8 1 7-6V2M11 9v3') + P('o', 'M9 18l7-6h7l-5 7zM9 18v3l8 2 6-7v-4M2 13q0 7 6 7')],
    ['Red cage', P('k', 'M2 9l17-6 4 5L6 14zM2 9v8l4 4 17-5V8M6 14v8') + '<path d="M0 8h3v3H0zM17 1h3v3h-3zM21 6h3v3h-3zM5 12h3v3H5zM11 9h3v3h-3z" fill="#e02020"/>' + N(6, 21, 22, 16)],
    ['Shell', P('G', 'M1 2h10q-1 6-4 7-3 4 0 6 3 2 4 8H1z') + P('o', 'M13 2h10v4l-2 2v8l2 2v5H13q-1-5-4-6-4-4 0-9 3-2 4-6z')],
    ['Mascot', '<circle cx="12" cy="6" r="5" fill="#7a3d16"/><circle cx="13" cy="7" r="3" fill="#e4a268"/><path d="M6 11h10l3 4-3 5H9l-3-3-3 2v-4z" fill="#14151a"/><path d="M5 23l5-3 4 2 5 1" stroke="#e08020" stroke-width="2" fill="none"/><path d="M16 3l6 1" stroke="#e02020" stroke-width="1.500"/>']
  ],
  panel: [
    ['Colors', wheel(8)], ['Layers', layers], ['Render', ball('bs', 11, 13, 9) + P('z', 'M13 4l4-3h7v5l-7 1z')],
    ['Brush', P('F', 'M9 9l8-7 5 3-8 8z') + P('w', 'M3 18l6-9 5 4-7 9-4 1z')], ['Library', folder],
    ['Help', '<path d="M0 1h24v22H0z" fill="#3a50b8" stroke="#222"/><path d="M1 6h22v16H1z" fill="#dfe6fb"/><circle cx="12" cy="14" r="8" fill="#3450b8"/>' + T('?', 8, 19, 14, '#fff', 'Open Sans', 700)],
    ['Options', gear('#e9ebef', '#b9c3dc')]
  ]
};

document.body.insertAdjacentHTML('afterbegin', `<svg width="0" height="0" style="position:absolute"><defs>${Object.entries(shades).map(([id, [from, to]]) =>
  id.length === 1
    ? `<linearGradient id="${id}" x2="1" y2="1"><stop offset="0" stop-color="${from}"/><stop offset="1" stop-color="${to}"/></linearGradient>`
    : `<radialGradient id="${id}" cx=".35" cy=".3" r=".7"><stop offset="0" stop-color="${from}"/><stop offset="1" stop-color="${to}"/></radialGradient>`).join('')}</defs></svg>`);

document.querySelectorAll('[data-toolbar]').forEach(bar => {
  const name = bar.dataset.toolbar;
  bar.innerHTML = toolbars[name].map(([label, art, more]) =>
    `<button class="tool${more ? ' more' : ''}${name === 'panel' && label === 'Help' ? ' active' : ''}" aria-label="${label}"><svg viewBox="0 0 24 24">${art}</svg></button>`).join('');
});
document.querySelectorAll('[data-gear]').forEach(b => {
  const light = b.dataset.gear === '#f1efe6';
  b.innerHTML = `<svg viewBox="0 0 24 24">${gear(light ? '#f1efe6' : '#e9ebef', light ? '#6a6a6a' : b.dataset.gear)}</svg>`;
});

// Construction plane grid: one line per unit, a heavier one every five, out to 70 units.
const EXTENT = 70, UNIT = 13.29;
function orthoGrid(w, h, cx, cy) {
  let minor = '', major = '';
  for (let i = -EXTENT; i <= EXTENT; i++) {
    const x = Math.round(cx + i * UNIT) + .5, y = Math.round(cy + i * UNIT) - .5;
    const d = `M${x} 0V${h}M0 ${y}H${w}`;
    if (i % 5) minor += d; else major += d;
  }
  return `<g class="ortho">${P('minor', minor)}${P('major', major)}</g>`;
}
// Camera 100 units from the origin, turned 30 degrees and raised 30 degrees, 50 mm lens.
function project(u, v, w, h) {
  const f = h / 2 / .24, depth = 100 - .433 * u + .75 * v;
  return [(w / 2 + f * (.866 * u + .5 * v) / depth).toFixed(1), (h / 2 - f * (-.25 * u + .433 * v) / depth).toFixed(1)];
}
function perspectiveGrid(w, h) {
  let minor = '', major = '';
  const line = (a, b, c, d) => `M${project(a, b, w, h)}L${project(c, d, w, h)}`;
  for (let i = -EXTENT; i <= EXTENT; i++) {
    const d = line(i, -EXTENT, i, EXTENT) + line(-EXTENT, i, EXTENT, i);
    if (i % 5) minor += d; else major += d;
  }
  return `<g class="persp">${P('minor', minor)}${P('major', major)}${P('red-axis', line(0, 0, EXTENT, 0))}${P('green-axis', line(0, 0, 0, EXTENT))}</g>`;
}
function drawViewport(section) {
  const w = section.clientWidth, h = section.clientHeight, cx = Math.floor(w / 2) - 1, cy = Math.round(h / 2), view = section.dataset.view;
  const b = h - 36.5;
  let out;
  if (view === 'perspective') {
    const ring = Array.from({ length: 73 }, (_, i) => project(-5.57 + 3 * Math.cos(i * Math.PI / 36), -.15 + 3 * Math.sin(i * Math.PI / 36), w, h)).join('L');
    out = perspectiveGrid(w, h) + P('curve', 'M' + ring) +
      P('triad', `M36.500 ${b - 26}V${b}l15-13M36.500 ${b}l26 8`) +
      `<text x="38" y="${b - 25}">z</text><text x="53" y="${b - 13}">y</text><text x="65" y="${b + 9}">x</text>`;
  } else {
    const [a, c] = { top: ['y', 'x'], front: ['z', 'x'], right: ['z', 'y'] }[view];
    out = orthoGrid(w, h, cx, cy) + `<g class="ortho">${P('green-axis', `M${cx} 0V${cy}`)}${P('red-axis', `M${cx} ${cy}H${w}`)}</g>`;
    out += view === 'top' ? C('curve', cx - 74, cy + 2, 40) : P('curve', view === 'front' ? `M${cx - 114} ${cy - .5}h79` : `M${cx - 41} ${cy - .5}h79`);
    out += P('triad', `M36.500 ${b - 30}V${b}h30`) + `<text x="39" y="${b - 30}">${a}</text><text x="69" y="${b + 1}">${c}</text>`;
  }
  section.querySelector(':scope > svg')?.remove();
  section.insertAdjacentHTML('afterbegin', `<svg aria-hidden="true">${out}</svg>`);
}
const drawAll = () => document.querySelectorAll('.viewport').forEach(drawViewport);
drawAll();
addEventListener('resize', drawAll);
```
